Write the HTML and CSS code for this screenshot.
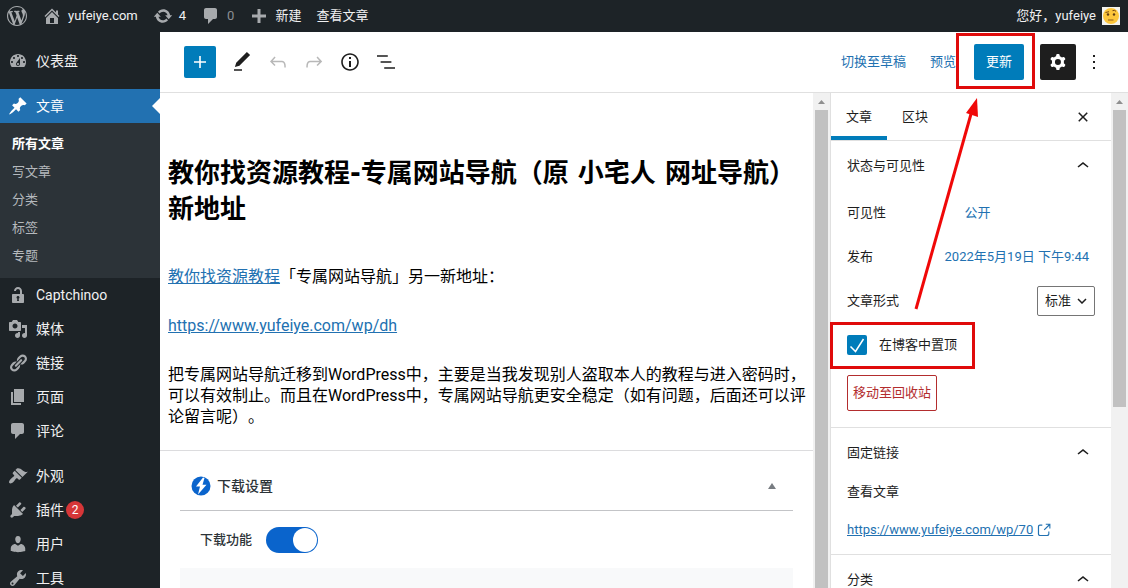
FILE: index.html
```html
<!DOCTYPE html>
<html lang="zh-CN">
<head>
<meta charset="utf-8">
<meta name="viewport" content="width=device-width, initial-scale=1">
<title>编辑文章</title>
<link rel="stylesheet" href="styles.css">
</head>
<body>
<div class="app">
  <header class="adminbar">
    <a class="bar-item bar-logo" href="#" aria-label="WordPress"><svg class="icon" viewBox="0 0 20 20"><path d="M20 10c0-5.51-4.49-10-10-10C4.48 0 0 4.49 0 10c0 5.52 4.48 10 10 10 5.51 0 10-4.48 10-10zM7.78 15.37L4.37 6.22c.55-.02 1.17-.08 1.17-.08.5-.06.44-1.13-.06-1.11 0 0-1.45.11-2.37.11-.18 0-.37 0-.58-.01C4.12 2.69 6.87 1.11 10 1.11c2.33 0 4.45.87 6.05 2.34-.68-.11-1.65.39-1.65 1.58 0 .74.45 1.36.9 2.1.35.61.55 1.36.55 2.46 0 1.49-1.4 5-1.4 5l-3.03-8.37c.54-.02.82-.17.82-.17.5-.05.44-1.25-.06-1.22 0 0-1.44.12-2.38.12-.87 0-2.33-.12-2.33-.12-.5-.03-.56 1.2-.06 1.22l.92.08 1.26 3.41zM17.41 10c.24-.64.74-1.87.43-4.25.7 1.29 1.05 2.71 1.05 4.25 0 3.29-1.73 6.24-4.4 7.78.97-2.59 1.94-5.2 2.92-7.78zM6.1 18.09C3.12 16.65 1.11 13.53 1.11 10c0-1.3.23-2.48.72-3.59C3.25 10.3 4.67 14.2 6.1 18.09zm4.03-6.63l2.58 6.98c-.86.29-1.76.45-2.71.45-.79 0-1.57-.11-2.29-.33.81-2.38 1.62-4.74 2.42-7.1z"/></svg></a>
    <a class="bar-item" href="#"><svg class="icon" viewBox="0 0 20 20"><path d="M16 8.5l1.53 1.53-1.06 1.06L10 4.6l-6.47 6.5-1.06-1.07L10 2.5l4 4v-2h2v4zm-6-2.46l6 5.99V18H4v-5.97zM12 17v-5H8v5h4z"/></svg>yufeiye.com</a>
    <a class="bar-item" href="#"><svg class="icon" viewBox="0 0 20 20"><path d="M10.2 3.28c3.53 0 6.43 2.61 6.92 6h2.08l-3.5 4-3.5-4h2.32c-.45-1.97-2.21-3.45-4.32-3.45-1.45 0-2.73.71-3.54 1.78L4.95 5.66C6.23 4.2 8.11 3.28 10.2 3.28zm-.4 13.44c-3.52 0-6.43-2.61-6.92-6H.8l3.5-4c1.17 1.33 2.33 2.67 3.5 4H5.48c.45 1.97 2.21 3.45 4.32 3.45 1.45 0 2.73-.71 3.54-1.78l1.71 1.95c-1.28 1.46-3.15 2.38-5.25 2.38z"/></svg>4</a>
    <a class="bar-item bar-muted" href="#"><svg class="icon" viewBox="0 0 20 20"><path d="M5 2h9c1.1 0 2 .9 2 2v7c0 1.1-.9 2-2 2h-2l-5 5v-5H5c-1.1 0-2-.9-2-2V4c0-1.1.9-2 2-2z"/></svg>0</a>
    <a class="bar-item" href="#"><svg class="icon" viewBox="0 0 20 20"><path d="M17 8.500v3h-5.500v5.500h-3v-5.500H3v-3h5.500V3h3v5.500z"/></svg>新建</a>
    <a class="bar-item" href="#">查看文章</a>
    <a class="bar-item bar-user" href="#">您好，yufeiye
      <svg class="avatar" viewBox="0 0 18 18"><rect width="18" height="18" fill="#f4f4f0"/><circle cx="9" cy="9" r="8" fill="#fcc63c"/><path d="M3.500 5.500l3.500-.8M10.500 3.700q2-1 3.500.6" fill="none" stroke="#7a4a12"/><circle cx="6" cy="7.500" r="1.200" fill="#5f3b14"/><circle cx="12" cy="7.500" r="1.200" fill="#5f3b14"/><path d="M6 13h5.500" stroke="#8d5a1c"/></svg></a>
  </header>

  <div class="body">
    <nav class="menu" aria-label="主菜单">
      <a class="menu-item" href="#"><svg class="icon" viewBox="0 0 20 20"><path d="M3.760 16h12.480c1.100-1.370 1.760-3.110 1.760-5 0-4.420-3.580-8-8-8s-8 3.580-8 8c0 1.890.66 3.630 1.760 5zM10 4c.55 0 1 .45 1 1s-.45 1-1 1-1-.45-1-1 .45-1 1-1zM6 6c.55 0 1 .45 1 1s-.45 1-1 1-1-.45-1-1 .45-1 1-1zm8 0c.55 0 1 .45 1 1s-.45 1-1 1-1-.45-1-1 .45-1 1-1zm-5.370 5.550L12 7v6c0 1.100-.9 2-2 2s-2-.9-2-2c0-.57.24-1.080.63-1.450zM4 10c.55 0 1 .45 1 1s-.45 1-1 1-1-.45-1-1 .45-1 1-1zm12 0c.55 0 1 .45 1 1s-.45 1-1 1-1-.45-1-1 .45-1 1-1zm-5 3c0-.55-.45-1-1-1s-1 .45-1 1 .45 1 1 1 1-.45 1-1z"/></svg>仪表盘</a>
      <div class="menu-gap"></div>
      <a class="menu-item current" href="#"><svg class="icon" viewBox="0 0 20 20"><path d="M10.440 3.020l1.820-1.820 6.360 6.350-1.830 1.820c-1.050-.68-2.480-.57-3.410.36l-.75.75c-.92.93-1.040 2.350-.35 3.410l-1.830 1.820-2.410-2.410-2.800 2.790c-.42.42-3.380 2.710-3.800 2.290s1.860-3.390 2.280-3.810l2.790-2.790L4.100 9.360l1.830-1.820c1.050.69 2.480.57 3.400-.36l.75-.75c.93-.92 1.050-2.350.36-3.410z"/></svg>文章</a>
      <div class="submenu">
        <a class="sub-item active" href="#">所有文章</a>
        <a class="sub-item" href="#">写文章</a>
        <a class="sub-item" href="#">分类</a>
        <a class="sub-item" href="#">标签</a>
        <a class="sub-item" href="#">专题</a>
      </div>
      <a class="menu-item" href="#"><svg class="icon" viewBox="0 0 20 20"><path d="M12 9V6c0-1.100-.9-2-2-2s-2 .9-2 2H6c0-2.210 1.790-4 4-4s4 1.790 4 4v3h1c.55 0 1 .45 1 1v7c0 .55-.45 1-1 1H5c-.55 0-1-.45-1-1v-7c0-.55.45-1 1-1h7zm-1 7l-.36-2.150c.51-.24.86-.75.86-1.350 0-.83-.67-1.500-1.500-1.500s-1.500.67-1.500 1.500c0 .6.35 1.110.86 1.350L9 16h2z"/></svg>Captchinoo</a>
      <a class="menu-item" href="#"><svg class="icon" viewBox="0 0 20 20"><path d="M13 11V4c0-.55-.45-1-1-1h-1.670L9 1H5L3.670 3H2c-.55 0-1 .45-1 1v7c0 .55.45 1 1 1h10c.55 0 1-.45 1-1zM7 4.500c1.380 0 2.500 1.120 2.500 2.500S8.380 9.500 7 9.500 4.500 8.380 4.500 7 5.620 4.500 7 4.500zM14 6h5v10.500c0 1.380-1.120 2.500-2.500 2.500S14 17.880 14 16.500s1.120-2.500 2.500-2.500c.17 0 .34.02.5.05V9h-3V6zm-4 8.050V13h2v3.500c0 1.380-1.120 2.500-2.500 2.500S7 17.880 7 16.500 8.120 14 9.500 14c.17 0 .34.02.5.05z"/></svg>媒体</a>
      <a class="menu-item" href="#"><svg class="icon" viewBox="0 0 20 20"><path d="M17.740 2.760c1.680 1.690 1.680 4.410 0 6.100l-1.530 1.520c-1.120 1.120-2.700 1.470-4.140 1.090l2.620-2.610.76-.77.76-.76c.84-.84.84-2.200 0-3.040-.84-.85-2.200-.85-3.040 0l-.77.76-3.380 3.380c-.37-1.440-.02-3.020 1.100-4.140l1.520-1.530c1.690-1.680 4.420-1.680 6.100 0zM8.590 13.430l5.340-5.340c.42-.42.42-1.100 0-1.520-.44-.43-1.130-.39-1.530 0l-5.330 5.340c-.42.42-.42 1.100 0 1.520.44.43 1.130.39 1.520 0zm-.76 2.290l4.140-4.150c.38 1.440.03 3.020-1.090 4.140l-1.520 1.530c-1.690 1.680-4.410 1.680-6.100 0-1.680-1.680-1.680-4.420 0-6.100l1.530-1.520c1.120-1.120 2.700-1.470 4.140-1.100l-4.140 4.150c-.85.84-.85 2.200 0 3.050.84.84 2.200.84 3.040 0z"/></svg>链接</a>
      <a class="menu-item" href="#"><svg class="icon" viewBox="0 0 20 20"><path d="M6 15V2h10v13H6zm-1 1h8v2H3V5h2v11z"/></svg>页面</a>
      <a class="menu-item" href="#"><svg class="icon" viewBox="0 0 20 20"><path d="M5 2h9c1.100 0 2 .9 2 2v7c0 1.100-.9 2-2 2h-2l-5 5v-5H5c-1.100 0-2-.9-2-2V4c0-1.100.9-2 2-2z"/></svg>评论</a>
      <div class="menu-gap"></div>
      <a class="menu-item" href="#"><svg class="icon" viewBox="0 0 20 20"><path d="M14.480 11.060L7.410 3.990l1.500-1.500c.5-.56 2.300-.47 3.510.32 1.210.8 1.430 1.280 2.910 2.100 1.180.64 2.450 1.260 4.450.85zm-.71.71L6.700 4.700 4.930 6.470c-.39.39-.39 1.020 0 1.410l1.060 1.060c.39.39.39 1.030 0 1.420-.6.6-1.430 1.110-2.210 1.690-.35.26-.7.53-1.010.84C1.430 14.230.4 16.080 1.400 17.070c.99 1 2.840-.03 4.180-1.360.31-.31.58-.66.85-1.020.57-.78 1.080-1.610 1.690-2.210.39-.39 1.020-.39 1.410 0l1.060 1.060c.39.39 1.020.39 1.410 0z"/></svg>外观</a>
      <a class="menu-item" href="#"><svg class="icon" viewBox="0 0 20 20"><path d="M13.110 4.360L9.870 7.600 8 5.730l3.240-3.240c.35-.34 1.050-.2 1.560.32.52.51.66 1.210.31 1.550zm-8 1.770l.91-1.120 9.010 9.010-1.190.84c-.71.71-2.630 1.160-3.820 1.160H6.140L4.900 17.260c-.59.59-1.540.59-2.120 0-.59-.58-.59-1.530 0-2.120l1.240-1.240v-3.880c0-1.130.4-3.190 1.090-3.890zm7.260 3.970l3.240-3.240c.34-.35 1.040-.21 1.550.31.52.51.66 1.210.31 1.550l-3.240 3.250z"/></svg>插件<span class="count">2</span></a>
      <a class="menu-item" href="#"><svg class="icon" viewBox="0 0 20 20"><path d="M10 9.250c-2.270 0-2.730-3.440-2.730-3.440C7 4.020 7.820 2 9.970 2c2.160 0 2.980 2.020 2.710 3.810 0 0-.41 3.440-2.680 3.440zm0 2.570L12.720 10c2.390 0 4.520 2.330 4.520 4.530v2.490s-3.650 1.130-7.240 1.130c-3.650 0-7.240-1.130-7.240-1.130v-2.490c0-2.250 1.940-4.480 4.470-4.480z"/></svg>用户</a>
      <a class="menu-item" href="#"><svg class="icon" viewBox="0 0 20 20"><path d="M16.680 9.770c-1.340 1.340-3.300 1.670-4.950.99l-5.410 6.520c-.99.99-2.590.99-3.580 0s-.99-2.590 0-3.570l6.520-5.420c-.68-1.650-.35-3.610.99-4.950 1.280-1.280 3.120-1.620 4.720-1.060l-2.890 2.890 2.820 2.820 2.860-2.870c.53 1.580.18 3.390-1.080 4.650zM3.810 16.210c.4.39 1.040.39 1.430 0 .4-.4.4-1.040 0-1.430-.39-.4-1.030-.4-1.430 0-.39.39-.39 1.030 0 1.430z"/></svg>工具</a>
    </nav>

    <main class="main">
      <div class="toolbar">
        <button class="tool-add" type="button" aria-label="添加区块"><svg class="icon24" viewBox="0 0 24 24"><path d="M18 11.200h-5.200V6h-1.600v5.200H6v1.600h5.200V18h1.600v-5.200H18z"/></svg></button>
        <div class="tools">
          <button class="tool" type="button" aria-label="编辑"><svg class="icon24" viewBox="0 0 24 24"><path d="M20.100 5.100L16.900 2 6.200 12.700l-1.300 4.400 4.500-1.300L20.100 5.100zM4 20.800h8v-1.500H4v1.500z"/></svg></button>
          <button class="tool disabled" type="button" aria-label="撤销" disabled><svg class="icon24" viewBox="0 0 24 24"><path d="M18.300 11.700c-.6-.6-1.400-.9-2.300-.9H6.700l2.900-3.300-1.100-1-4.500 5L8.500 16l1-1-2.700-2.700H16c.5 0 .9.2 1.300.5 1 1 1 3.400 1 4.500v.3h1.500v-.2c0-1.500 0-4.300-1.500-5.700z"/></svg></button>
          <button class="tool disabled" type="button" aria-label="重做" disabled><svg class="icon24" viewBox="0 0 24 24"><path d="M15.600 6.500l-1.100 1 2.900 3.300H8c-.9 0-1.700.3-2.300.9-1.400 1.500-1.400 4.200-1.400 5.600v.2h1.500v-.3c0-1.100 0-3.500 1-4.500.3-.3.7-.5 1.300-.5h9.200L14.500 15l1.100 1.100 4.600-4.600-4.600-5z"/></svg></button>
          <button class="tool" type="button" aria-label="详情"><svg class="icon24" viewBox="0 0 24 24"><path d="M12 3.200c-4.800 0-8.800 3.900-8.800 8.800 0 4.800 3.900 8.800 8.800 8.800 4.800 0 8.800-3.900 8.800-8.800 0-4.800-4-8.800-8.800-8.800zm0 16c-4 0-7.200-3.300-7.200-7.200C4.800 8 8 4.800 12 4.800s7.200 3.300 7.200 7.200c0 4-3.200 7.200-7.200 7.200zM11 17h2v-6h-2v6zm0-8h2V7h-2v2z"/></svg></button>
          <button class="tool" type="button" aria-label="列表视图"><svg class="icon24" viewBox="0 0 24 24"><path d="M13.800 5.200H3v1.500h10.800V5.200zm-3.600 12v1.500H21v-1.500H10.200zm7.200-6H6.600v1.500h10.800v-1.500z"/></svg></button>
        </div>
        <div class="actions">
          <button class="text-btn" type="button">切换至草稿</button>
          <button class="text-btn" type="button">预览</button>
          <button class="update" type="button">更新</button>
          <button class="settings" type="button" aria-label="设置"><svg class="icon24" viewBox="0 0 24 24"><path fill-rule="evenodd" d="M10.289 4.836A1 1 0 0111.275 4h1.306a1 1 0 01.987.836l.244 1.466c.787.26 1.503.679 2.108 1.218l1.393-.522a1 1 0 011.216.437l.653 1.130a1 1 0 01-.23 1.273l-1.148.944a6.025 6.025 0 010 2.435l1.149.946a1 1 0 01.23 1.272l-.653 1.130a1 1 0 01-1.216.437l-1.394-.522c-.605.54-1.320.958-2.108 1.218l-.244 1.466a1 1 0 01-.987.836h-1.306a1 1 0 01-.986-.836l-.244-1.466a5.995 5.995 0 01-2.108-1.218l-1.394.522a1 1 0 01-1.217-.436l-.653-1.131a1 1 0 01.23-1.272l1.149-.946a6.026 6.026 0 010-2.435l-1.148-.944a1 1 0 01-.23-1.272l.653-1.131a1 1 0 011.217-.437l1.393.522a5.994 5.994 0 012.108-1.218l.244-1.466zM14.929 12a3 3 0 11-6 0 3 3 0 016 0z"/></svg></button>
          <button class="tool" type="button" aria-label="选项"><svg class="icon24" viewBox="0 0 24 24"><path d="M13 19h-2v-2h2v2zm0-6h-2v-2h2v2zm0-6h-2V5h2v2z"/></svg></button>
        </div>
      </div>

      <div class="workspace">
        <section class="editor">
          <article class="post">
            <h1 class="post-title">教你找资源教程-专属网站导航（原 小宅人 网址导航）新地址</h1>
            <p class="para"><a class="link" href="#">教你找资源教程</a>「专属网站导航」另一新地址：</p>
            <p class="para"><a class="link" href="#">https://www.yufeiye.com/wp/dh</a></p>
            <p class="para">把专属网站导航迁移到WordPress中，主要是当我发现别人盗取本人的教程与进入密码时，可以有效制止。而且在WordPress中，专属网站导航更安全稳定（如有问题，后面还可以评论留言呢）。</p>
          </article>
          <section class="metabox">
            <h2 class="metabox-head">
              <svg class="bolt" viewBox="0 0 20 20"><circle cx="10" cy="10" r="9.500" fill="#0a64cc"/><path d="M12 1.500L5 10.500h4L7 18.500 15.500 8.800h-4L13.500 2z" fill="#fff"/></svg>
              <span class="metabox-title">下载设置</span>
              <svg class="caret" viewBox="0 0 8 6"><path d="M4 0l4 6H0z"/></svg>
            </h2>
            <div class="metabox-row">
              <label class="metabox-label" for="dl">下载功能</label>
              <input class="switch" id="dl" type="checkbox" role="switch" checked>
            </div>
            <div class="metabox-fill"></div>
          </section>
        </section>
        <div class="scrollbar"><svg class="scroll-arrow" viewBox="0 0 7 4"><path d="M3.500 0L7 4H0z"/></svg><div class="thumb thumb-full"></div></div>

        <aside class="panel">
          <div class="tabs">
            <button class="tab selected" type="button">文章</button>
            <button class="tab" type="button">区块</button>
            <button class="close" type="button" aria-label="关闭"><svg class="icon24" viewBox="0 0 24 24"><path d="M12 13.060l3.712 3.713 1.061-1.060L13.061 12l3.712-3.712-1.060-1.060L12 10.938 8.288 7.227l-1.061 1.060L10.939 12l-3.712 3.712 1.060 1.061L12 13.061z"/></svg></button>
          </div>
          <section class="group">
            <button class="group-head" type="button">状态与可见性<svg class="icon24" viewBox="0 0 24 24"><path d="M6.500 12.400L12 8l5.500 4.400-.9 1.200L12 10l-4.500 3.600-1-1.200z"/></svg></button>
            <div class="field"><span class="field-label">可见性</span><button class="field-btn" type="button">公开</button></div>
            <div class="field"><span class="field-label">发布</span><button class="field-btn" type="button">2022年5月19日 下午9:44</button></div>
            <div class="field field-split"><label for="format">文章形式</label>
              <span class="select-wrap"><select class="select" id="format"><option>标准</option></select><svg class="select-arrow" viewBox="0 0 10 6"><path d="M1 1l4 4 4-4" fill="none" stroke="#1e1e1e" stroke-width="1.500"/></svg></span></div>
            <div class="field sticky"><span class="check-wrap"><input class="check" id="sticky" type="checkbox" checked><svg class="check-mark" viewBox="0 0 20 20"><path d="M3.500 11.500l5 5L16.500 4" fill="none" stroke="#fff" stroke-width="1.500"/></svg></span><label for="sticky">在博客中置顶</label></div>
            <button class="trash" type="button">移动至回收站</button>
          </section>
          <section class="group">
            <button class="group-head" type="button">固定链接<svg class="icon24" viewBox="0 0 24 24"><path d="M6.500 12.400L12 8l5.500 4.400-.9 1.200L12 10l-4.500 3.600-1-1.200z"/></svg></button>
            <div class="permalink">
              <span>查看文章</span>
              <a class="perma-link" href="#">https://www.yufeiye.com/wp/70<svg class="external" viewBox="3 2 19 19"><path d="M18.200 17c0 .7-.6 1.200-1.200 1.200H7c-.7 0-1.200-.6-1.200-1.200V7c0-.7.6-1.200 1.200-1.200h3.200V4.200H7C5.500 4.200 4.200 5.500 4.200 7v10c0 1.500 1.200 2.800 2.800 2.800h10c1.500 0 2.800-1.200 2.800-2.800v-3.600h-1.500V17zM14.900 3v1.500h3.700l-6.400 6.400 1.100 1.100 6.400-6.400v3.700h1.500V3h-6.300z"/></svg></a>
            </div>
          </section>
          <section class="group">
            <button class="group-head" type="button">分类<svg class="icon24" viewBox="0 0 24 24"><path d="M6.500 12.400L12 8l5.500 4.400-.9 1.200L12 10l-4.500 3.600-1-1.200z"/></svg></button>
          </section>
        </aside>
        <div class="scrollbar"><svg class="scroll-arrow" viewBox="0 0 7 4"><path d="M3.500 0L7 4H0z"/></svg><div class="thumb"></div></div>
      </div>
    </main>
  </div>

  <svg class="callout" viewBox="0 0 205 337" aria-hidden="true">
    <rect x="127.500" y="2.500" width="76" height="53" fill="none" stroke="#e00b0b" stroke-width="3"/>
    <rect x="1.500" y="291.500" width="142" height="44" fill="none" stroke="#e00b0b" stroke-width="3"/>
    <path d="M86 277L141 82" stroke="#f00808" stroke-width="3"/>
    <path d="M147 66L136 81l12 4z" fill="#f00808"/>
  </svg>
</div>
</body>
</html>
```
FILE: styles.css
```css
*, *::before, *::after { box-sizing: border-box; }

body {
  margin: 0;
  font-family: Roboto, "Noto Sans CJK SC", sans-serif;
  font-size: 13px;
  line-height: 20px;
  color: #1e1e1e;
  background: #fff;
  text-spacing-trim: space-all;
}

button, select, input { font: inherit; color: inherit; margin: 0; }
button { padding: 0; border: 0; background: none; white-space: nowrap; cursor: pointer; }
a { text-decoration: none; color: inherit; }
svg { display: block; flex: none; fill: currentColor; }

.app { position: relative; display: flex; flex-direction: column; height: 100vh; overflow: hidden; }
.icon { width: 20px; height: 20px; color: #a7aaad; }
.icon24 { width: 24px; height: 24px; }

/* Admin bar */
.adminbar { flex: none; display: flex; align-items: center; height: 32px; padding: 0 8px 0 7px; gap: 15px; background: #1d2327; color: #f0f0f1; }
.bar-item { display: flex; align-items: center; gap: 6px; white-space: nowrap; }
.bar-muted { color: #8c8f94; }
.bar-user { margin-left: auto; }
.avatar { width: 18px; height: 18px; }

/* Main menu */
.body { flex: 1; display: flex; min-height: 0; }
.menu { flex: none; width: 160px; padding-top: 12px; background: #1d2327; color: #f0f0f1; font-size: 14px; overflow: hidden; }
.menu-item { position: relative; display: flex; align-items: center; height: 34px; padding-left: 8px; gap: 8px; }
.menu-gap { height: 11px; }
.current { background: #2271b1; color: #fff; }
.current .icon { color: #fff; }
.current::after { content: ""; position: absolute; right: 0; top: 9px; border: 8px solid transparent; border-left: 0; border-right-color: #fff; }
.submenu { padding: 7px 0 8px; background: #2c3338; font-size: 13px; }
.sub-item { display: block; padding: 4px 12px; color: #b5b9bd; }
.active { color: #fff; font-weight: 700; }
.count { width: 18px; height: 18px; margin-left: -6px; border-radius: 9px; background: #d63638; color: #fff; font-size: 12px; line-height: 18px; text-align: center; }

/* Toolbar */
.main { flex: 1; display: flex; flex-direction: column; min-width: 0; }
.toolbar { flex: none; display: flex; align-items: center; height: 61px; padding: 0 16px 0 24px; gap: 8px; border-bottom: 1px solid #e0e0e0; }
.tool-add { display: grid; place-items: center; width: 32px; height: 32px; border-radius: 2px; background: #007cba; color: #fff; }
.tools, .actions { display: flex; align-items: center; }
.actions { margin-left: auto; }
.tool { display: grid; place-items: center; width: 36px; height: 36px; color: #1e1e1e; }
.disabled { color: #b8b8b8; }
.text-btn { padding: 0 12px; color: #2271b1; line-height: 36px; }
.update { margin: 0 16px 0 6px; padding: 0 12px; border-radius: 2px; background: #007cba; color: #fff; line-height: 36px; }
.settings { display: grid; place-items: center; width: 36px; height: 36px; border-radius: 2px; background: #1e1e1e; color: #fff; }

/* Editor */
.workspace { flex: 1; display: flex; min-height: 0; }
.editor { flex: 1; min-width: 0; overflow: hidden; }
.post { padding: 62px 4px 23px 8px; border-bottom: 1px solid #dcdcde; color: #000; font-size: 16px; line-height: 21px; }
.post-title { margin: 0 0 39px; font-family: "DejaVu Sans", "Noto Sans CJK SC", sans-serif; font-size: 26px; line-height: 36px; font-weight: 700; }
.para { margin: 0 0 28px; }
.para:last-child { margin-bottom: 0; }
.link { color: #2271b1; text-decoration: underline; }

.metabox { margin: 0 20px; }
.metabox-head { display: flex; align-items: center; height: 60px; margin: 0; padding: 10px 17px 0 11px; gap: 6px; border-bottom: 1px solid #c3c4c7; font-size: 14px; font-weight: 500; color: #2c3338; }
.bolt { width: 20px; height: 20px; }
.metabox-title { flex: 1; }
.caret { width: 8px; height: 6px; color: #787c82; }
.metabox-row { display: flex; align-items: center; height: 57px; padding-left: 20px; gap: 14px; color: #2c3338; font-weight: 500; }
.switch { appearance: none; width: 52px; height: 26px; padding: 1px; border-radius: 13px; background: #0a64cc; }
.switch::before { content: ""; display: block; width: 24px; height: 24px; margin-left: auto; border-radius: 50%; background: #fff; }
.metabox-fill { height: 40px; background: #f8f9fa; }

.scrollbar { flex: none; display: flex; flex-direction: column; align-items: center; width: 17px; background: #f1f1f1; }
.scroll-arrow { width: 7px; height: 4px; margin: 7px 0 6px; color: #8f8f8f; }
.thumb { width: 13px; height: 60%; background: #c1c1c1; }
.thumb-full { flex: 1; }

/* Settings panel */
.panel { flex: none; width: 281px; border-left: 1px solid #e0e0e0; overflow: hidden; }
.tabs { display: flex; height: 48px; padding-right: 16px; border-bottom: 1px solid #e0e0e0; }
.tab { padding: 0 15px; border-bottom: 4px solid transparent; border-top: 4px solid transparent; }
.selected { border-bottom-color: #007cba; }
.close { margin-left: auto; }
.group { padding: 0 16px 14px; border-bottom: 1px solid #e0e0e0; }
.group-head { display: flex; align-items: center; justify-content: space-between; width: 100%; height: 50px; line-height: 16px; }
.field { display: flex; align-items: center; height: 44px; }
.field-label { flex: 0 1 45%; }
.field-btn { flex: none; padding: 0 6px; color: #2271b1; }
.field-split { justify-content: space-between; }
.select-wrap { position: relative; }
.select { appearance: none; display: block; width: 58px; height: 30px; padding: 0 7px; border: 1px solid #757575; border-radius: 2px; background: #fff; }
.select-arrow { position: absolute; right: 8px; top: 12px; width: 10px; height: 6px; pointer-events: none; }
.sticky { gap: 12px; }
.check-wrap { position: relative; display: block; }
.check { appearance: none; display: block; width: 20px; height: 20px; border-radius: 2px; background: #007cba; }
.check-mark { position: absolute; inset: 0; width: 20px; height: 20px; pointer-events: none; }
.trash { display: block; margin: 8px 0 2px; padding: 0 5px; border: 1px solid #b32d2e; border-radius: 2px; color: #b32d2e; line-height: 34px; }
.permalink { display: flex; flex-direction: column; gap: 18px; padding-top: 4px; }
.perma-link { display: flex; align-items: center; gap: 4px; color: #2271b1; text-decoration: underline; }
.external { width: 14px; height: 14px; }

/* Callout marks laid over the right-hand controls */
.callout { position: absolute; top: 32px; right: 93px; width: 205px; height: 337px; pointer-events: none; }
```
